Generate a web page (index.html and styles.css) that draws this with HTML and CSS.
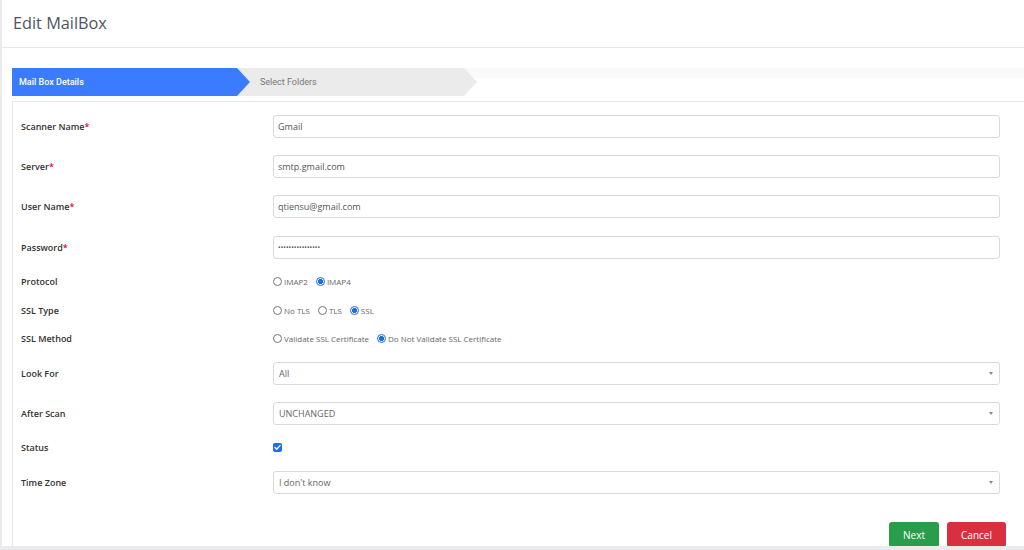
FILE: index.html
```html
<!DOCTYPE html>
<html lang="en">
<head>
<meta charset="utf-8">
<title>Edit MailBox</title>
<link rel="stylesheet" href="styles.css">
</head>
<body>
<div class="page">
  <div class="header">Edit MailBox</div>
  <div class="wizard">
    <div class="step step-active">Mail Box Details</div>
    <div class="step step-next">Select Folders</div>
  </div>
  <div class="card">
    <div class="form">
      <div class="row row-input">
        <div class="label">Scanner Name<span class="req">*</span></div>
        <div class="control"><input class="text" type="text" value="Gmail"></div>
      </div>
      <div class="row row-input mt-17">
        <div class="label">Server<span class="req">*</span></div>
        <div class="control"><input class="text" type="text" value="smtp.gmail.com"></div>
      </div>
      <div class="row row-input mt-17">
        <div class="label">User Name<span class="req">*</span></div>
        <div class="control"><input class="text" type="text" value="qtiensu@gmail.com"></div>
      </div>
      <div class="row row-input mt-18">
        <div class="label">Password<span class="req">*</span></div>
        <div class="control"><input class="text" type="password" value="abcdefghijklmnop"></div>
      </div>
      <div class="row row-option mt-14">
        <div class="label">Protocol</div>
        <div class="control options">
          <label class="opt"><input type="radio" name="proto"><span>IMAP2</span></label>
          <label class="opt"><input type="radio" name="proto" checked><span>IMAP4</span></label>
        </div>
      </div>
      <div class="row row-option mt-13">
        <div class="label">SSL Type</div>
        <div class="control options">
          <label class="opt"><input type="radio" name="ssltype"><span>No TLS</span></label>
          <label class="opt"><input type="radio" name="ssltype"><span>TLS</span></label>
          <label class="opt"><input type="radio" name="ssltype" checked><span>SSL</span></label>
        </div>
      </div>
      <div class="row row-option mt-12">
        <div class="label">SSL Method</div>
        <div class="control options">
          <label class="opt"><input type="radio" name="sslmethod"><span>Validate SSL Certificate</span></label>
          <label class="opt"><input type="radio" name="sslmethod" checked><span>Do Not Validate SSL Certificate</span></label>
        </div>
      </div>
      <div class="row row-input mt-16">
        <div class="label">Look For</div>
        <div class="control"><div class="select"><span>All</span><span class="caret"></span></div></div>
      </div>
      <div class="row row-input mt-17">
        <div class="label">After Scan</div>
        <div class="control"><div class="select"><span>UNCHANGED</span><span class="caret"></span></div></div>
      </div>
      <div class="row row-option mt-14">
        <div class="label">Status</div>
        <div class="control"><span class="check"><svg width="9" height="9" viewBox="0 0 9 9"><path d="M2 4.6 L3.7 6.3 L7 2.6" fill="none" stroke="#fff" stroke-width="1.4" stroke-linecap="round" stroke-linejoin="round"/></svg></span></div>
      </div>
      <div class="row row-input mt-16">
        <div class="label">Time Zone</div>
        <div class="control"><div class="select"><span>I don't know</span><span class="caret"></span></div></div>
      </div>
      <div class="actions">
        <button class="btn btn-next" type="button">Next</button>
        <button class="btn btn-cancel" type="button">Cancel</button>
      </div>
    </div>
  </div>
</div>
</body>
</html>
```

FILE: styles.css
```css
* { box-sizing: border-box; }
html, body { margin: 0; padding: 0; }
body {
  background: #ebebef;
  font-family: "Open Sans", "Liberation Sans", sans-serif;
  width: 1024px;
  height: 550px;
  overflow: hidden;
}
.page {
  margin-left: 2px;
  height: 546px;
  background: #fff;
  overflow: hidden;
}
.header {
  height: 48px;
  border-bottom: 1px solid #e6e6e6;
  padding-left: 11px;
  line-height: 47px;
  font-size: 16.3px;
  color: #505560;
}
.wizard {
  margin: 20px 0 0 10px;
  height: 28px;
  display: flex;
  background: linear-gradient(#fafafa 0, #fafafa 10px, #fff 10px);
}
.step {
  height: 28px;
  line-height: 28px;
  font-family: Roboto, "Liberation Sans", sans-serif;
  font-size: 9px;
  clip-path: polygon(0 0, calc(100% - 13px) 0, 100% 50%, calc(100% - 13px) 100%, 0 100%);
}
.step-active {
  width: 238px;
  padding-left: 7px;
  background: #3b7bff;
  color: #fff;
  font-weight: 500;
  position: relative;
  z-index: 2;
}
.step-next {
  width: 240px;
  margin-left: -13px;
  padding-left: 23px;
  background: #ebebeb;
  color: #777;
}
.card {
  margin: 5px 0 0 10px;
  border: 1px solid #e6e6e6;
  border-right: none;
  padding: 13px 24px 0 8px;
  height: 600px;
}
.form { display: flex; flex-direction: column; }
.row { display: flex; align-items: center; }
.row-input { height: 23px; }
.row-option { height: 16px; }
.mt-12 { margin-top: 12px; }
.mt-13 { margin-top: 13px; }
.mt-14 { margin-top: 14px; }
.mt-16 { margin-top: 16px; }
.mt-17 { margin-top: 17px; }
.mt-18 { margin-top: 18px; }
.label {
  width: 252px;
  flex: none;
  font-size: 9px;
  font-weight: 600;
  color: #333;
}
.req { color: #e3062b; }
.control { flex: 1; height: 100%; display: flex; align-items: center; }
.text, .select {
  width: 100%;
  height: 23px;
  border: 1px solid #dadada;
  border-radius: 3px;
  padding: 0 4px;
  font-family: "Open Sans", "Liberation Sans", sans-serif;
  font-size: 9px;
  color: #555;
  background: #fff;
  outline: none;
}
.text[type="password"] { font-size: 7px; letter-spacing: 0; }
.select {
  display: flex;
  align-items: center;
  justify-content: space-between;
  padding: 0 6px 0 5px;
  color: #666;
}
.caret {
  width: 0;
  height: 0;
  border-left: 2.5px solid transparent;
  border-right: 2.5px solid transparent;
  border-top: 3px solid #888;
}
.options { gap: 8px; }
.opt {
  display: flex;
  align-items: center;
  gap: 2px;
  font-size: 8px;
  color: #666;
}
.opt input {
  appearance: none;
  -webkit-appearance: none;
  margin: 0;
  width: 9px;
  height: 9px;
  border: 1px solid #767676;
  border-radius: 50%;
  background: #fff;
}
.opt input:checked {
  border-color: #1a6fe8;
  background: radial-gradient(circle, #1a6fe8 0, #1a6fe8 2.3px, #fff 2.8px);
}
.check {
  width: 9px;
  height: 9px;
  border-radius: 2px;
  background: #1a6fe8;
  display: flex;
}
.actions {
  display: flex;
  justify-content: flex-end;
  gap: 8px;
  margin-top: 28px;
  margin-right: -6px;
}
.btn {
  height: 25px;
  border: none;
  border-radius: 3px;
  color: #fff;
  font-family: "Open Sans", "Liberation Sans", sans-serif;
  font-size: 10px;
  padding: 0;
}
.btn-next { width: 50px; background: #2a9d4c; }
.btn-cancel { width: 59px; background: #d9303f; }
```
